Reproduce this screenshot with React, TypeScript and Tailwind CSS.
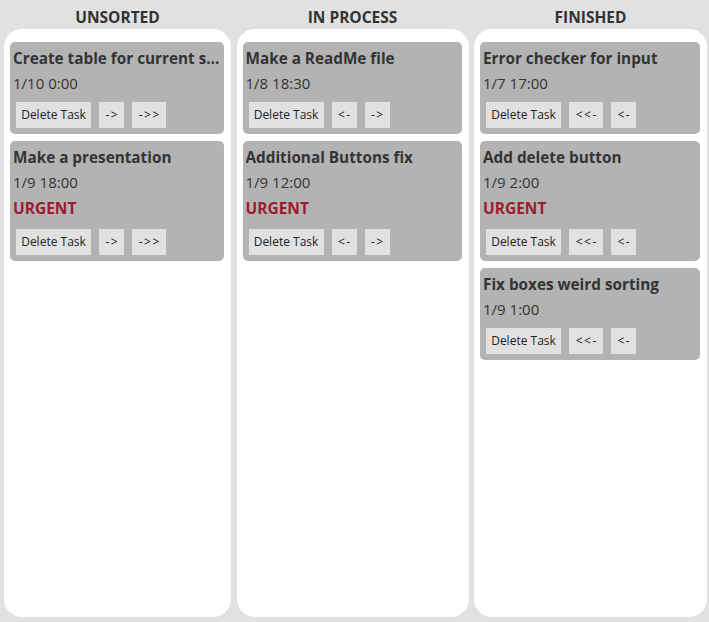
import React from "react";

type Task = { title: string; date: string; urgent?: boolean };

const COLUMNS: { name: string; buttons: string[]; tasks: Task[] }[] = [
  {
    name: "UNSORTED",
    buttons: ["->", "->>"],
    tasks: [
      { title: "Create table for current schedule", date: "1/10 0:00" },
      { title: "Make a presentation", date: "1/9 18:00", urgent: true },
    ],
  },
  {
    name: "IN PROCESS",
    buttons: ["<-", "->"],
    tasks: [
      { title: "Make a ReadMe file", date: "1/8 18:30" },
      { title: "Additional Buttons fix", date: "1/9 12:00", urgent: true },
    ],
  },
  {
    name: "FINISHED",
    buttons: ["<<-", "<-"],
    tasks: [
      { title: "Error checker for input", date: "1/7 17:00" },
      { title: "Add delete button", date: "1/9 2:00", urgent: true },
      { title: "Fix boxes weird sorting", date: "1/9 1:00" },
    ],
  },
];

// button widths follow the label length
const BTN_W: Record<string, string> = {
  "Delete Task": "w-[75px]",
  "->": "w-[25px] tracking-[1.5px] pl-[1.5px]",
  "<-": "w-[25px] tracking-[1.5px] pl-[1.5px]",
  "->>": "w-[34px] tracking-[1.5px] pl-[1.5px]",
  "<<-": "w-[34px] tracking-[1.5px] pl-[1.5px]",
};

function Btn({ label }: { label: string }) {
  return (
    <button
      className={`${BTN_W[label]} h-[26px] bg-[#e1e1e1] text-[12px] text-[#222] leading-none flex items-center justify-center`}
    >
      {label}
    </button>
  );
}

function TaskCard({ task, buttons }: { task: Task; buttons: string[] }) {
  return (
    <div className="bg-[#b3b3b3] rounded-[5px] pt-[4px] px-[3px] pb-[6px] text-[#333]">
      <div className="text-[15.3px] font-bold leading-[25px] truncate">{task.title}</div>
      <div className="text-[15px] leading-[25px]">{task.date}</div>
      {task.urgent && (
        <div className="h-[28px] text-[15.5px] font-bold leading-[26px] text-[#9c1c2e]">URGENT</div>
      )}
      <div className="flex gap-[8px] ml-[3px] mt-[6px]">
        <Btn label="Delete Task" />
        {buttons.map((b) => (
          <Btn key={b} label={b} />
        ))}
      </div>
    </div>
  );
}

export default function App() {
  return (
    <div
      className="h-screen bg-[#e1e1e1] grid grid-cols-[227fr_232fr_233fr] gap-[5.5px] pl-[4px] pr-[2px] pb-[5px]"
      style={{ fontFamily: '"Open Sans", "Noto Sans", sans-serif' }}
    >
      {COLUMNS.map((col) => (
        <div key={col.name} className="flex flex-col min-w-0">
          <h2 className="h-[29px] pt-[6px] flex items-center justify-center text-[15.5px] font-bold text-[#333]">
            {col.name}
          </h2>
          <div className="flex-1 bg-white rounded-[18px] pt-[13px] pl-[6px] pr-[7px] flex flex-col gap-[7px]">
            {col.tasks.map((t) => (
              <TaskCard key={t.title} task={t} buttons={col.buttons} />
            ))}
          </div>
        </div>
      ))}
    </div>
  );
}
